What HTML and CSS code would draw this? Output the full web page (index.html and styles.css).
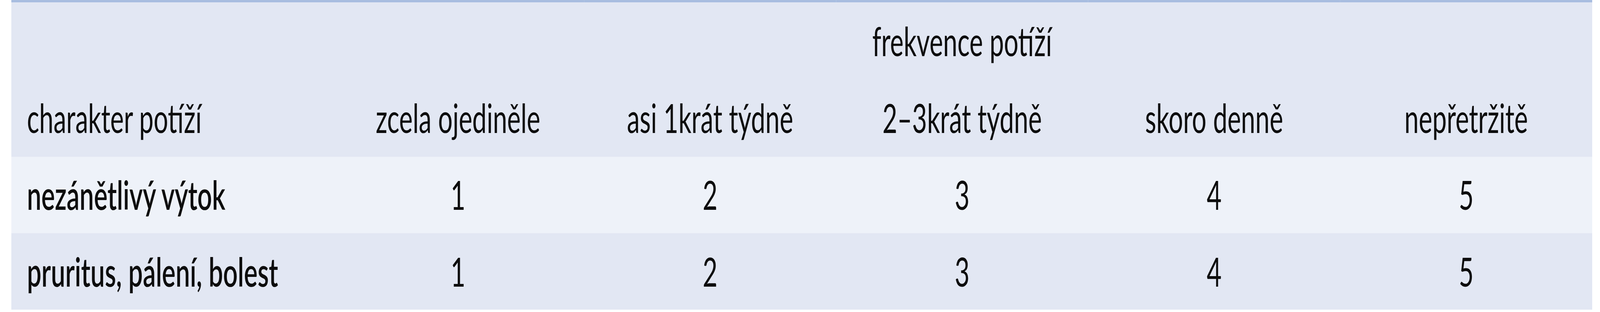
FILE: index.html
```html
<!DOCTYPE html>
<html lang="cs">
<head>
<meta charset="utf-8">
<title>Frekvence potíží</title>
<link rel="stylesheet" href="styles.css">
</head>
<body>
<div class="frame">
<div class="page">
<table class="grid">
  <colgroup>
    <col class="c-label">
    <col class="c-val"><col class="c-val"><col class="c-val"><col class="c-val"><col class="c-val">
  </colgroup>
  <thead>
    <tr class="r-top">
      <th class="label"></th>
      <th class="val" colspan="5">frekvence potíží</th>
    </tr>
    <tr class="r-head">
      <th class="label">charakter potíží</th>
      <th class="val">zcela ojediněle</th>
      <th class="val">asi 1krát týdně</th>
      <th class="val">2–3krát týdně</th>
      <th class="val">skoro denně</th>
      <th class="val">nepřetržitě</th>
    </tr>
  </thead>
  <tbody>
    <tr class="r-odd">
      <td class="label strong">nezánětlivý výtok</td>
      <td class="val">1</td><td class="val">2</td><td class="val">3</td><td class="val">4</td><td class="val">5</td>
    </tr>
    <tr class="r-even">
      <td class="label strong">pruritus, pálení, bolest</td>
      <td class="val">1</td><td class="val">2</td><td class="val">3</td><td class="val">4</td><td class="val">5</td>
    </tr>
  </tbody>
</table>
</div>
</div>
</body>
</html>
```

FILE: styles.css
```css
html, body {
  margin: 0;
  padding: 0;
  background: #ffffff;
  overflow: hidden;
}
.frame {
  width: 100vw;
  height: 100vh;
  overflow: hidden;
}
.page {
  width: 6361px;
  padding: 0 0 0 45px;
  box-sizing: border-box;
  transform: scaleX(0.643922);
  transform-origin: 0 0;
}
.grid {
  border-collapse: collapse;
  table-layout: fixed;
  width: 6285px;
  font-family: Lato, "Open Sans", sans-serif;
  font-size: 102px;
  color: #0d0d0d;
  border-top: 6px solid #a8bde0;
  background: linear-gradient(to bottom,
    #e2e7f3 0, #e2e7f3 399px,
    #eef2f9 399px, #eef2f9 595px,
    #e2e7f3 595px);
}
.c-label { width: 1275px; }
.c-val { width: 1002px; }
.grid th, .grid td {
  height: 196px;
  padding: 0;
  line-height: 197px;
  font-weight: normal;
  white-space: nowrap;
  vertical-align: top;
}
.grid .label {
  text-align: left;
  padding-left: 62px;
}
.val { text-align: center; }
.grid .strong { font-weight: 600; }
```
